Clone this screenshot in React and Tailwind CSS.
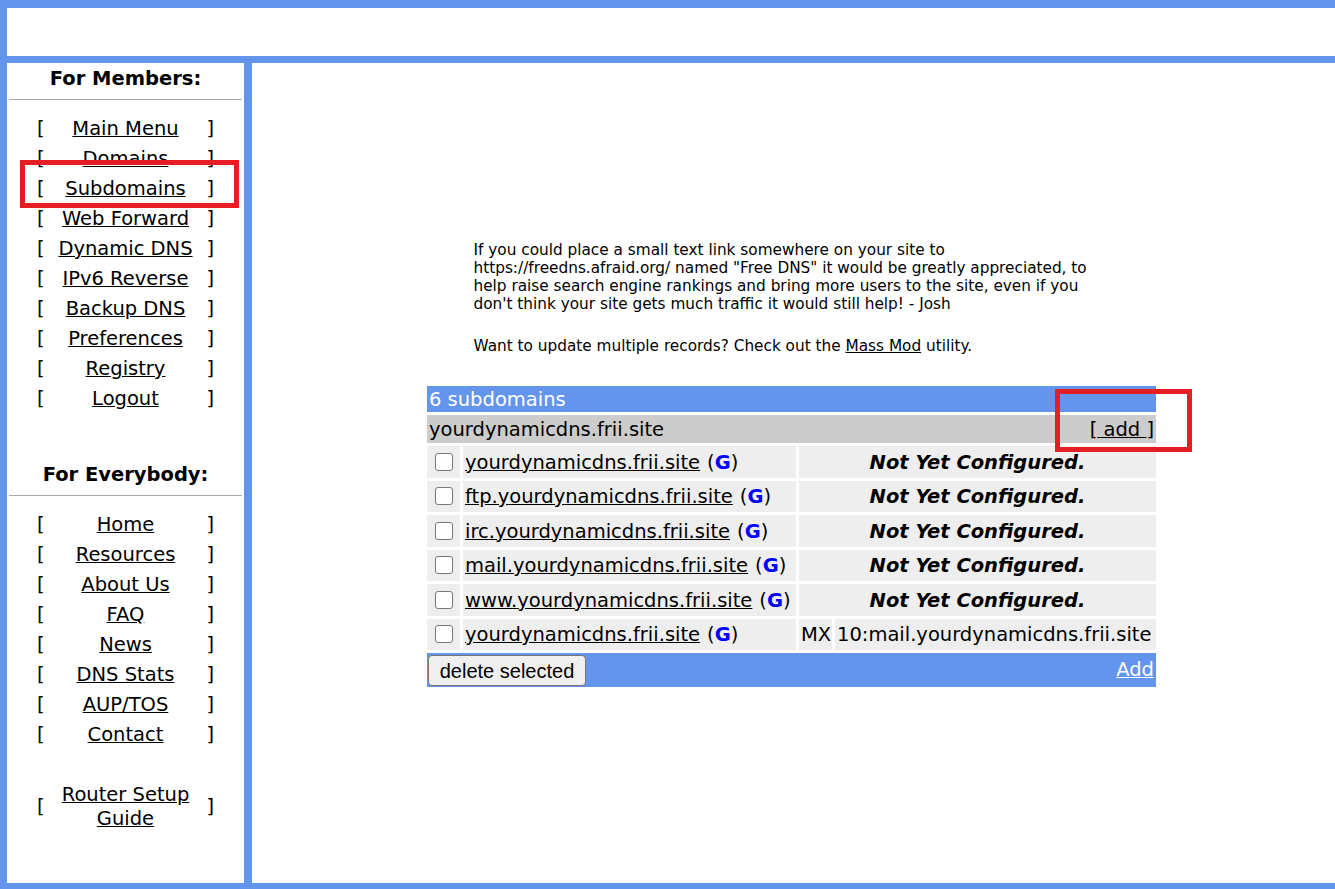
import React from "react";

const memberLinks = [
  "Main Menu",
  "Domains",
  "Subdomains",
  "Web Forward",
  "Dynamic DNS",
  "IPv6 Reverse",
  "Backup DNS",
  "Preferences",
  "Registry",
  "Logout",
];

const everybodyLinks = [
  "Home",
  "Resources",
  "About Us",
  "FAQ",
  "News",
  "DNS Stats",
  "AUP/TOS",
  "Contact",
];

const records = [
  { name: "yourdynamicdns.frii.site" },
  { name: "ftp.yourdynamicdns.frii.site" },
  { name: "irc.yourdynamicdns.frii.site" },
  { name: "mail.yourdynamicdns.frii.site" },
  { name: "www.yourdynamicdns.frii.site" },
  { name: "yourdynamicdns.frii.site", type: "MX", value: "10:mail.yourdynamicdns.frii.site" },
];

function NavRow({ label, highlight, tall }) {
  return (
    <div
      className={
        "relative grid grid-cols-[auto_1fr_auto] items-center px-[30px] " +
        (tall ? "leading-[24px]" : "h-[30px] leading-[30px]")
      }
    >
      <span>[</span>
      <a href="#" className="text-center underline text-black px-2">
        {label}
      </a>
      <span>]</span>
      {highlight && (
        <span className="absolute left-[13px] right-[5px] top-[-14px] bottom-[-4px] border-[5px] border-[#e41e22] pointer-events-none" />
      )}
    </div>
  );
}

function Sidebar() {
  return (
    <aside className="w-[237px] shrink-0 bg-white text-[19.5px] text-black pt-px">
      <div className="h-[30px] leading-[30px] text-center font-bold">For Members:</div>
      <div className="mt-[5px] mx-[2px] h-px bg-[#aaaaaa]" />
      <div className="mt-[14px]">
        {memberLinks.map((l) => (
          <NavRow key={l} label={l} highlight={l === "Subdomains"} />
        ))}
      </div>

      <div className="mt-[46px] h-[30px] leading-[30px] text-center font-bold">For Everybody:</div>
      <div className="mt-[5px] mx-[2px] h-px bg-[#aaaaaa]" />
      <div className="mt-[14px]">
        {everybodyLinks.map((l) => (
          <NavRow key={l} label={l} />
        ))}
      </div>
      <div className="mt-[33px]">
        <NavRow label="Router Setup Guide" tall />
      </div>
    </aside>
  );
}

function Checkbox() {
  return (
    <span className="block w-[18px] h-[18px] rounded-[3px] border-[1.5px] border-[#767676] bg-white" />
  );
}

function SubdomainTable() {
  return (
    <div className="w-[729px] mr-[4px] mt-[32px] grid grid-cols-[33px_333px_33px_1fr] gap-[3px] text-[19.5px] text-black">
      <div className="col-span-4 h-[26px] leading-[28px] bg-[#6495ed] text-white pl-[2px]">
        6 subdomains
      </div>

      <div className="relative col-span-4 h-[28px] bg-[#cccccc] flex items-center justify-between px-[2px] pt-[2px]">
        <span>yourdynamicdns.frii.site</span>
        <span>
          [<a href="#" className="underline text-black">&nbsp;add&nbsp;</a>]
        </span>
        <span className="absolute right-[-36px] top-[-26px] bottom-[-9px] w-[137px] border-[5px] border-[#e41e22] pointer-events-none" />
      </div>

      {records.map((r, i) => (
        <React.Fragment key={i}>
          <div className="h-[31.5px] bg-[#eeeeee] flex items-center justify-center">
            <Checkbox />
          </div>
          <div className="h-[31.5px] bg-[#eeeeee] flex items-center pl-[2px] pt-px whitespace-nowrap">
            <a href="#" className="underline text-black">{r.name}</a>
            <span className="ml-[7px]">
              (<span className="font-bold text-[#0000ff]">G</span>)
            </span>
          </div>
          {r.type ? (
            <>
              <div className="h-[31.5px] bg-[#eeeeee] flex items-center pl-[2px] pt-px">{r.type}</div>
              <div className="h-[31.5px] bg-[#eeeeee] flex items-center pl-[2px] pt-px whitespace-nowrap">
                {r.value}
              </div>
            </>
          ) : (
            <div className="col-span-2 h-[31.5px] bg-[#eeeeee] flex items-center justify-center pt-px font-bold italic">
              Not Yet Configured.
            </div>
          )}
        </React.Fragment>
      ))}

      <div className="col-span-4 h-[34px] bg-[#6495ed] flex items-center justify-between pl-[1px] pr-[2px]">
        <button className="h-[31px] w-[158px] bg-[#efefef] border border-[#767676] rounded-[4px] font-['Liberation_Sans',Arial,sans-serif] text-[20px] text-black">
          delete selected
        </button>
        <a href="#" className="underline text-white">Add</a>
      </div>
    </div>
  );
}

export default function App() {
  return (
    <div className="h-screen bg-[#6495ed] pl-[7px] pt-2 pb-[6px] flex flex-col gap-[7px] font-['DejaVu_Sans','Verdana',sans-serif] overflow-hidden">
      <div className="h-[48px] shrink-0 bg-white" />
      <div className="flex flex-1 min-h-0 gap-2">
        <Sidebar />
        <main className="flex-1 bg-white flex flex-col items-center pt-[178px]">
          <div className="w-[640px] text-[15.3px] leading-[18px] text-black">
            <p>
              If you could place a small text link somewhere on your site to
              <br />
              https://freedns.afraid.org/ named "Free DNS" it would be greatly appreciated, to
              <br />
              help raise search engine rankings and bring more users to the site, even if you
              <br />
              don't think your site gets much traffic it would still help! - Josh
            </p>
            <p className="mt-[24px]">
              Want to update multiple records? Check out the{" "}
              <a href="#" className="underline text-black">Mass Mod</a> utility.
            </p>
          </div>
          <div className="-mt-px">
            <SubdomainTable />
          </div>
        </main>
      </div>
    </div>
  );
}
